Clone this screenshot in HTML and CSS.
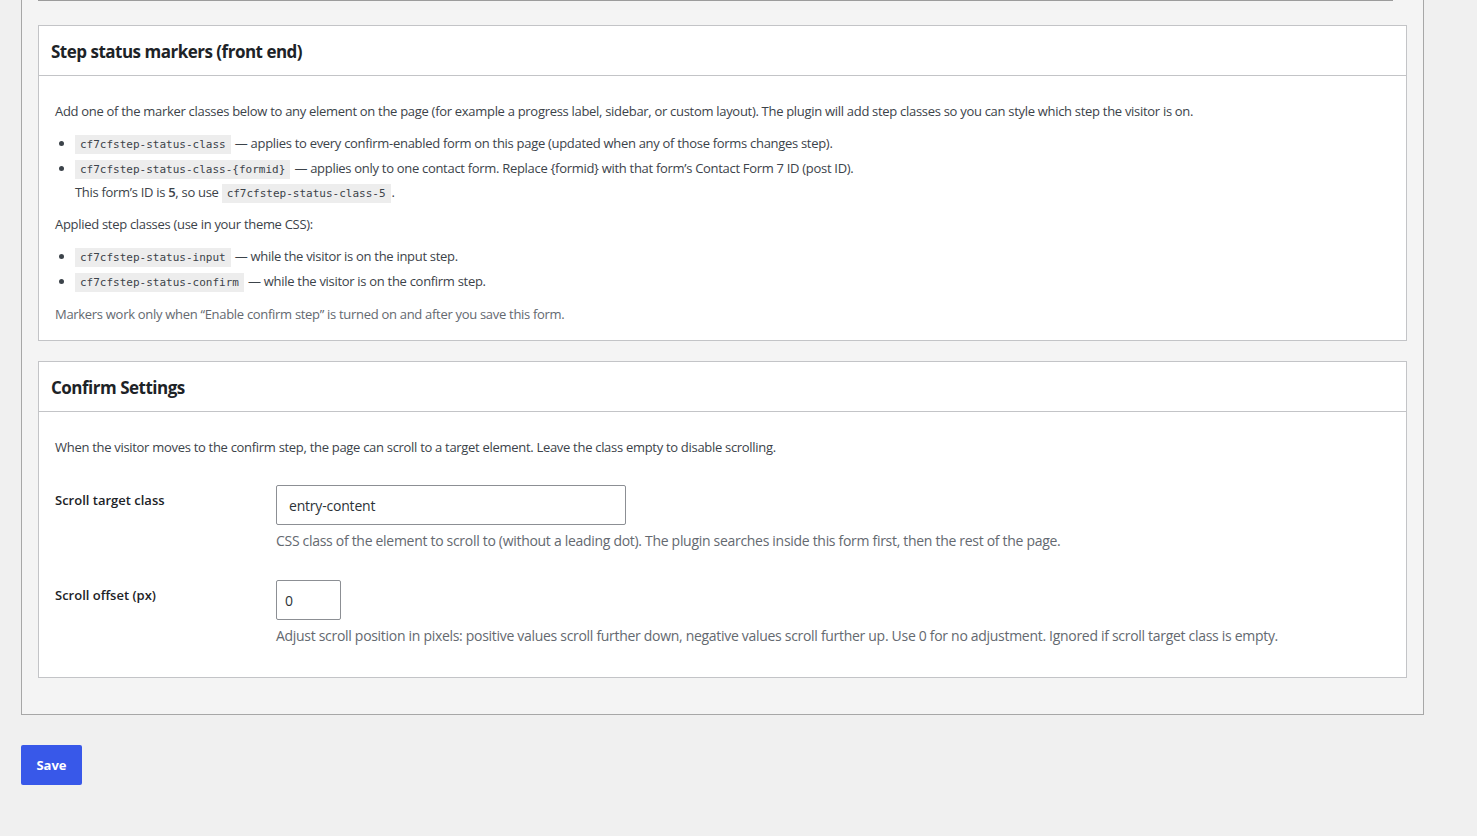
FILE: index.html
```html
<!DOCTYPE html>
<html lang="en">
<head>
    <meta charset="UTF-8">
    <meta name="viewport" content="width=device-width, initial-scale=1.0">
    <title>Confirm Step Settings</title>
    <link rel="stylesheet" href="styles.css">
</head>
<body>
    <div class="settings-panel">
        <div class="prev-edge"></div>

        <!-- Step status markers -->
        <div class="postbox">
            <h2 class="postbox-title">Step status markers (front end)</h2>
            <div class="postbox-inside">
                <p>Add one of the marker classes below to any element on the page (for example a progress label, sidebar, or custom layout). The plugin will add step classes so you can style which step the visitor is on.</p>
                <ul class="marker-list">
                    <li><code>cf7cfstep-status-class</code> — applies to every confirm-enabled form on this page (updated when any of those forms changes step).</li>
                    <li><code>cf7cfstep-status-class-{formid}</code> — applies only to one contact form. Replace {formid} with that form’s Contact Form 7 ID (post ID).</li>
                </ul>
                <p class="form-id">This form’s ID is <strong>5</strong>, so use <code>cf7cfstep-status-class-5</code>.</p>
                <p>Applied step classes (use in your theme CSS):</p>
                <ul class="marker-list">
                    <li><code>cf7cfstep-status-input</code> — while the visitor is on the input step.</li>
                    <li><code>cf7cfstep-status-confirm</code> — while the visitor is on the confirm step.</li>
                </ul>
                <p class="description">Markers work only when “Enable confirm step” is turned on and after you save this form.</p>
            </div>
        </div>

        <!-- Confirm settings -->
        <div class="postbox">
            <h2 class="postbox-title">Confirm Settings</h2>
            <div class="postbox-inside">
                <p>When the visitor moves to the confirm step, the page can scroll to a target element. Leave the class empty to disable scrolling.</p>
                <div class="field-row">
                    <label class="field-label" for="scrollTarget">Scroll target class</label>
                    <div class="field-body">
                        <input type="text" id="scrollTarget" class="text-input wide" value="entry-content">
                        <p class="field-help">CSS class of the element to scroll to (without a leading dot). The plugin searches inside this form first, then the rest of the page.</p>
                    </div>
                </div>
                <div class="field-row">
                    <label class="field-label" for="scrollOffset">Scroll offset (px)</label>
                    <div class="field-body">
                        <input type="text" id="scrollOffset" class="text-input small" value="0">
                        <p class="field-help">Adjust scroll position in pixels: positive values scroll further down, negative values scroll further up. Use 0 for no adjustment. Ignored if scroll target class is empty.</p>
                    </div>
                </div>
            </div>
        </div>
    </div>

    <div class="actions">
        <button class="save-btn">Save</button>
    </div>
</body>
</html>
```

FILE: styles.css
```css
body {
    font-family: "Open Sans", "Noto Sans", sans-serif;
    font-size: 13px;
    letter-spacing: -0.3px;
    color: #3c434a;
    margin: 0;
    padding: 0 53px 0 21px;
    background-color: #f0f0f0;
}
.settings-panel {
    background-color: #f4f4f4;
    border: 1px solid #a7a7a7;
    border-top: none;
    padding: 0 16px 36px;
}
.prev-edge {
    height: 1px;
    background-color: #9c9c9c;
    margin-right: 14px;
    margin-bottom: 24px;
}
.postbox {
    background-color: #fff;
    border: 1px solid #c3c4c7;
    margin-bottom: 20px;
}
.postbox:last-child {
    margin-bottom: 0;
}
.postbox-title {
    margin: 0;
    height: 49px;
    line-height: 51px;
    padding: 0 12px;
    font-size: 17px;
    font-weight: 700;
    letter-spacing: -0.5px;
    color: #1d2327;
    border-bottom: 1px solid #c3c4c7;
}
.postbox-inside {
    padding: 25px 16px 16px;
}
.postbox-inside p {
    margin: 0 0 12px;
    line-height: 20px;
}
.postbox-inside p:last-child {
    margin-bottom: 0;
}
.marker-list {
    margin: 0 0 4px;
    padding-left: 20px;
}
.marker-list li {
    line-height: 20px;
    height: 20px;
    margin-bottom: 5px;
}
.marker-list li:last-child {
    margin-bottom: 0;
}
.marker-list + .description {
    padding-top: 9px;
}
code {
    font-family: "DejaVu Sans Mono", "Liberation Mono", monospace;
    font-size: 11px;
    line-height: 1;
    letter-spacing: 0;
    background-color: #ededed;
    color: #3c434a;
    padding: 3px 5px 3px;
    margin: 0 1px 0 0;
}
.postbox-inside p.form-id {
    margin-left: 20px;
}
.form-id strong {
    font-weight: 600;
}
.description,
.field-help {
    color: #646970;
}
.field-row {
    display: flex;
    margin-top: 28px;
}
.field-row + .field-row {
    margin-top: 29px;
}
.field-row:last-child {
    margin-bottom: 15px;
}
.field-label {
    width: 221px;
    flex-shrink: 0;
    padding-top: 5px;
    font-weight: 600;
    letter-spacing: 0;
    color: #1d2327;
    line-height: 20px;
}
.field-body .field-help {
    margin: 6px 0 0;
    font-size: 14px;
}
.text-input {
    display: block;
    font-family: inherit;
    font-size: 14px;
    letter-spacing: -0.2px;
    color: #2c3338;
    height: 40px;
    box-sizing: border-box;
    border: 1px solid #8c8f94;
    border-radius: 2px;
    padding: 0 12px;
    margin: 0;
}
.text-input.wide {
    width: 350px;
}
.text-input.small {
    width: 65px;
    padding: 0 8px;
}
.actions {
    padding-top: 30px;
}
.save-btn {
    font-family: inherit;
    font-size: 13px;
    font-weight: 700;
    color: #fff;
    background-color: #3858e9;
    border: none;
    border-radius: 2px;
    width: 61px;
    height: 40px;
    cursor: pointer;
}
```
